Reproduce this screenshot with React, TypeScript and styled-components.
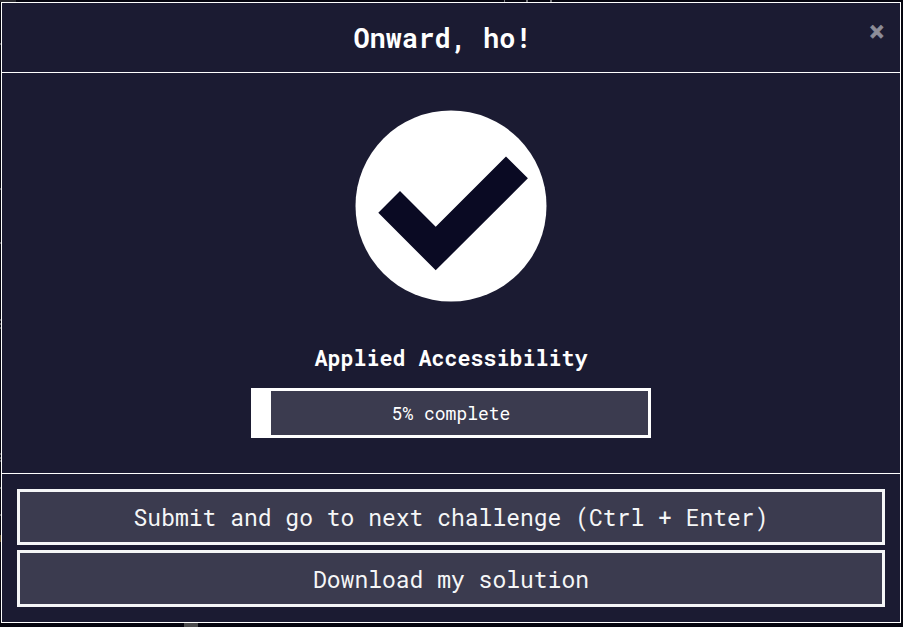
import React from 'react';
import styled, { createGlobalStyle } from 'styled-components';

const Global = createGlobalStyle`
  * { box-sizing: border-box; }
  body { margin: 0; background: #05050f; overflow: hidden; }
  button { font-family: inherit; }
`;

const Backdrop = styled.div`
  position: relative;
  width: 903px;
  height: 627px;
  padding: 2px 2px 4px 1px;
  background: #05050f;
  color: #fff;
  font-family: "Roboto Mono", "DejaVu Sans Mono", monospace;
`;

/* Slivers of the dimmed editor that show round the dialog */
const Sliver = styled.span<{ $x: number; $y: number; $w: number; $h: number; $tone: string }>`
  position: absolute;
  left: ${p => p.$x}px;
  top: ${p => p.$y}px;
  width: ${p => p.$w}px;
  height: ${p => p.$h}px;
  background: ${p => p.$tone};
`;

const Dialog = styled.section`
  height: 621px;
  border: 1px solid #fff;
  background: #1b1b32;
  display: flex;
  flex-direction: column;
`;

const Header = styled.header`
  height: 70px;
  border-bottom: 1px solid #fff;
  display: flex;
  align-items: flex-start;
  padding: 15px 15px 0;
`;

const Title = styled.h1`
  flex: 1;
  margin: 1px 0 0;
  font-size: 27px;
  line-height: 38px;
  text-align: center;
  white-space: nowrap;
`;

const Close = styled.button`
  width: 17px;
  height: 25px;
  padding: 0;
  border: 0;
  background: transparent;
  color: #8d8d98;
  font-size: 27px;
  font-weight: 700;
  line-height: 25px;
  -webkit-text-stroke: 0.7px #8d8d98;
`;

const Body = styled.main`
  flex: 1;
  display: flex;
  flex-direction: column;
  align-items: center;
  padding-top: 37px;
`;

const Badge = styled.svg`
  display: block;
  width: 192px;
  height: 192px;
`;

const BlockName = styled.h2`
  margin: 40px 0 0;
  font-size: 21.6px;
  line-height: 32px;
  letter-spacing: 0.04px;
`;

const Progress = styled.div`
  position: relative;
  width: 400px;
  height: 50px;
  margin-top: 14px;
  border: 3px solid #fff;
  background: #3b3b4f;
  display: flex;
  align-items: center;
  justify-content: center;
  font-size: 18px;
`;

const ProgressFill = styled.div`
  position: absolute;
  inset: 0 auto 0 0;
  width: 17px;
  background: #fff;
`;

const Footer = styled.footer`
  height: 149px;
  border-top: 1px solid #fff;
  padding: 15px;
  display: flex;
  flex-direction: column;
  gap: 5px;
`;

const Action = styled.button<{ $height: number }>`
  height: ${p => p.$height}px;
  padding: 0;
  border: 3px solid #f5f6f7;
  background: #3b3b4f;
  color: #f5f6f7;
  font-size: 23px;
`;

const leftMarks = [43, 188, 242, 319, 323, 327, 453, 457, 460, 487, 514];

export default function App() {
  return (
    <>
      <Global />
      <Backdrop>
        <Dialog role="dialog" aria-labelledby="dialog-title">
          <Header>
            <Title id="dialog-title">Onward, ho!</Title>
            <Close aria-label="Close">×</Close>
          </Header>
          <Body>
            <Badge viewBox="0 0 192 192" aria-label="Passed">
              <circle cx="96" cy="96" r="95.5" fill="#fff" />
              <path d="M23.3 102.7 45 81l35.7 35.7 70.3-70.2 21.9 21.8-92.2 92Z" fill="#0a0a23" />
            </Badge>
            <BlockName>Applied Accessibility</BlockName>
            <Progress>
              <ProgressFill />
              5% complete
            </Progress>
          </Body>
          <Footer>
            <Action $height={56}>Submit and go to next challenge (Ctrl + Enter)</Action>
            <Action $height={57}>Download my solution</Action>
          </Footer>
        </Dialog>
        {leftMarks.map(y => <Sliver key={y} $x={0} $y={y} $w={1} $h={2} $tone="#55555c" />)}
        <Sliver $x={0} $y={535} $w={1} $h={7} $tone="#5c4a28" />
        <Sliver $x={0} $y={0} $w={16} $h={2} $tone="#29292e" />
        <Sliver $x={504} $y={0} $w={1} $h={2} $tone="#77777c" />
        <Sliver $x={526} $y={0} $w={2} $h={2} $tone="#77777c" />
        <Sliver $x={550} $y={0} $w={2} $h={2} $tone="#77777c" />
        <Sliver $x={184} $y={623} $w={14} $h={4} $tone="#4b4b4d" />
      </Backdrop>
    </>
  );
}
